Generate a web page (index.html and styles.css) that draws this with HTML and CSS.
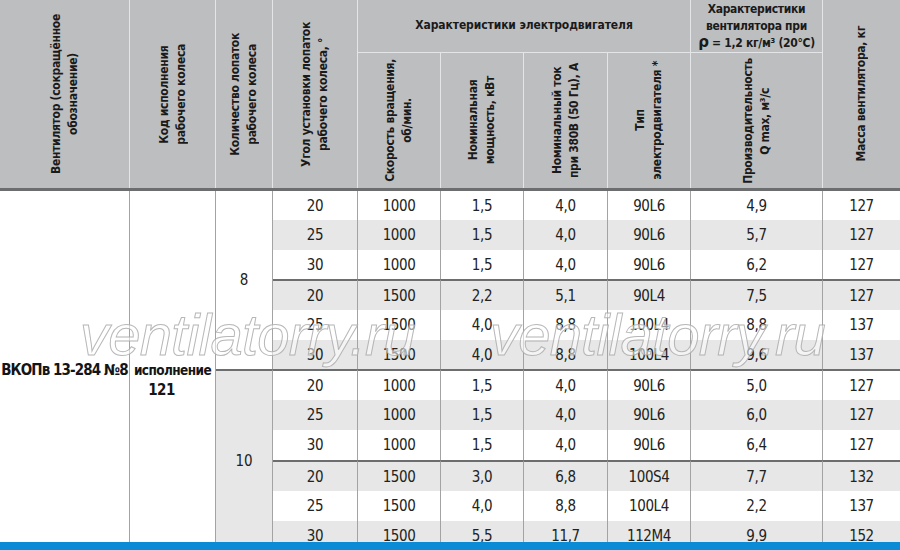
FILE: index.html
```html
<!DOCTYPE html>
<html lang="ru">
<head>
<meta charset="utf-8">
<title>ВКОПв 13-284 №8</title>
<link rel="stylesheet" href="styles.css">
</head>
<body>
<div class="sheet">
  <div class="head">
    <div class="hc span2 c1"><span class="vt">Вентилятор (сокращённое<br>обозначение)</span></div>
    <div class="hc span2 c2"><span class="vt">Код исполнения<br>рабочего колеса</span></div>
    <div class="hc span2 c3"><span class="vt">Количество лопаток<br>рабочего колеса</span></div>
    <div class="hc span2 c4"><span class="vt">Угол установки лопаток<br>рабочего колеса, °</span></div>
    <div class="hc group g1"><span>Характеристики электродвигателя</span></div>
    <div class="hc group g2"><span>Характеристики<br>вентилятора при<br><span class="rho">ρ</span> = 1,2 кг/м³ (20°С)</span></div>
    <div class="hc span2 c10 last"><span class="vt">Масса вентилятора, кг</span></div>
    <div class="hc sub"><span class="vt">Скорость вращения,<br>об/мин.</span></div>
    <div class="hc sub"><span class="vt">Номинальная<br>мощность, кВт</span></div>
    <div class="hc sub"><span class="vt">Номинальный ток<br>при 380В (50 Гц), А</span></div>
    <div class="hc sub"><span class="vt">Тип<br>электродвигателя *</span></div>
    <div class="hc sub"><span class="vt">Производительность<br>Q max, м³/с</span></div>
  </div>

  <div class="body">
    <div class="cell model"><span>ВКОПв 13-284 №8</span></div>
    <div class="cell code"><span>исполнение</span><span class="num121">121</span></div>
    <div class="cell blades b8">8</div>
    <div class="cell blades b10">10</div>

    <div class="row"><div>20</div><div>1000</div><div>1,5</div><div>4,0</div><div>90L6</div><div>4,9</div><div>127</div></div>
    <div class="row alt"><div>25</div><div>1000</div><div>1,5</div><div>4,0</div><div>90L6</div><div>5,7</div><div>127</div></div>
    <div class="row"><div>30</div><div>1000</div><div>1,5</div><div>4,0</div><div>90L6</div><div>6,2</div><div>127</div></div>
    <div class="row alt sep"><div>20</div><div>1500</div><div>2,2</div><div>5,1</div><div>90L4</div><div>7,5</div><div>127</div></div>
    <div class="row"><div>25</div><div>1500</div><div>4,0</div><div>8,8</div><div>100L4</div><div>8,8</div><div>137</div></div>
    <div class="row alt"><div>30</div><div>1500</div><div>4,0</div><div>8,8</div><div>100L4</div><div>9,6</div><div>137</div></div>
    <div class="row sep"><div>20</div><div>1000</div><div>1,5</div><div>4,0</div><div>90L6</div><div>5,0</div><div>127</div></div>
    <div class="row alt"><div>25</div><div>1000</div><div>1,5</div><div>4,0</div><div>90L6</div><div>6,0</div><div>127</div></div>
    <div class="row"><div>30</div><div>1000</div><div>1,5</div><div>4,0</div><div>90L6</div><div>6,4</div><div>127</div></div>
    <div class="row alt sep"><div>20</div><div>1500</div><div>3,0</div><div>6,8</div><div>100S4</div><div>7,7</div><div>132</div></div>
    <div class="row"><div>25</div><div>1500</div><div>4,0</div><div>8,8</div><div>100L4</div><div>2,2</div><div>137</div></div>
    <div class="row alt"><div>30</div><div>1500</div><div>5,5</div><div>11,7</div><div>112M4</div><div>9,9</div><div>152</div></div>

    <span class="wm wm1">ventilatorry.ru</span>
    <span class="wm wm2">ventilatorry.ru</span>
  </div>
</div>
<div class="bluebar"></div>
</body>
</html>
```

FILE: styles.css
```css
html, body {
  margin: 0;
  padding: 0;
  height: 550px;
  overflow: hidden;
  background: #ffffff;
}

.sheet {
  width: 900px;
  font-family: "DejaVu Sans Condensed", "Liberation Sans", sans-serif;
  color: #1e1e1e;
}

/* ---------- header ---------- */
.head {
  display: grid;
  grid-template-columns: 130px 86px 57px 85px 83px 83px 84px 83px 132px 77px;
  grid-template-rows: 53px 135px;
  background: #bdbec0;
  border-bottom: 3px solid #6c6d6f;
}

.hc {
  box-sizing: border-box;
  border-right: 1px solid #e4e5e6;
  display: flex;
  align-items: center;
  justify-content: center;
  text-align: center;
  font-weight: bold;
  font-size: 12px;
  letter-spacing: -0.3px;
  line-height: 17px;
  color: #1a1a1a;
}

.hc.last { border-right: none; }

.span2 { grid-row: 1 / 3; }
.c1 { grid-column: 1; }
.c2 { grid-column: 2; }
.c3 { grid-column: 3; }
.c4 { grid-column: 4; }
.c10 { grid-column: 10; }

.group {
  grid-row: 1;
  border-bottom: 1px solid #e4e5e6;
}
.g1 { grid-column: 5 / 9; padding-bottom: 2px; letter-spacing: -0.1px; }
.g2 { grid-column: 9; line-height: 17px; padding-top: 1px; white-space: nowrap; }

.rho {
  font-family: "DejaVu Sans", sans-serif;
  font-size: 15px;
  line-height: 15px;
}

.sub { grid-row: 2; }

.vt {
  writing-mode: vertical-rl;
  transform: rotate(180deg);
  white-space: nowrap;
}

/* ---------- body ---------- */
.body {
  position: relative;
  display: grid;
  grid-template-columns: 130px 86px 57px 85px 83px 83px 84px 83px 132px 77px;
  grid-template-rows: 29px 30px 29px 31px 30px 29px 31px 30px 30px 31px 30px 30px;
}

.cell {
  box-sizing: border-box;
  border-right: 1px solid #a3a3a3;
  display: flex;
  align-items: center;
  justify-content: center;
  text-align: center;
}

.model {
  grid-column: 1;
  grid-row: 1 / 13;
  font-weight: bold;
  font-size: 15px;
  letter-spacing: -0.9px;
  white-space: nowrap;
  color: #151515;
  padding-bottom: 2px;
}

.code {
  grid-column: 2;
  grid-row: 1 / 13;
  flex-direction: column;
  font-weight: bold;
  font-size: 13.5px;
  letter-spacing: -0.6px;
  line-height: 20px;
  color: #151515;
  padding-top: 18px;
  white-space: nowrap;
}
.code .num121 { margin-right: 22px; font-size: 15px; }

.blades {
  grid-column: 3;
  font-size: 15px;
  color: #222;
}
.b8 { grid-row: 1 / 7; background: #ffffff; }
.b10 {
  grid-row: 7 / 13;
  background: #e6e7e6;
  border-top: 2px solid #6c6d6f;
}

.row { display: contents; }

.row > div {
  box-sizing: border-box;
  border-right: 1px solid #a3a3a3;
  display: flex;
  align-items: center;
  justify-content: center;
  font-size: 15px;
  letter-spacing: -0.4px;
  color: #222222;
  background: #ffffff;
}
.row > div:last-child { border-right: none; }
.row.alt > div { background: #e6e7e6; }
.row.sep > div { border-top: 2px solid #6c6d6f; }

/* ---------- watermark ---------- */
.wm {
  position: absolute;
  top: 115px;
  font-family: "Liberation Sans", sans-serif;
  font-style: italic;
  font-size: 58px;
  line-height: 58px;
  letter-spacing: -0.8px;
  color: rgba(255, 255, 255, 0.55);
  -webkit-text-stroke: 1px rgba(170, 170, 170, 0.85);
  white-space: nowrap;
  pointer-events: none;
}
.wm1 { left: 80px; }
.wm2 { left: 490px; }

/* ---------- bottom bar ---------- */
.bluebar {
  position: fixed;
  left: 0;
  right: 0;
  bottom: 0;
  height: 8px;
  background: #0b8ad6;
}
```
